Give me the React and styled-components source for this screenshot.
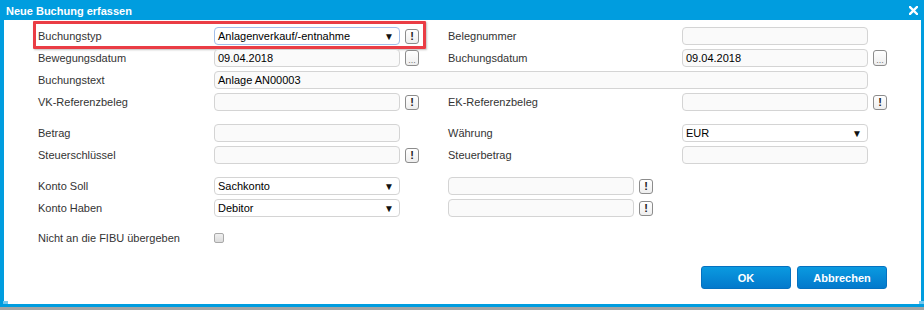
import React from "react";
import styled, { createGlobalStyle } from "styled-components";

const GlobalStyle = createGlobalStyle`
  html, body {
    margin: 0;
    padding: 0;
    background: #a4a4a4;
  }
  body {
    font-family: "Liberation Sans", Arial, sans-serif;
    font-size: 11px;
    color: #333;
  }
`;

const blue = "#009ddf";

const Window = styled.div`
  position: relative;
  width: 924px;
  height: 307px;
  background: ${blue};
  display: flex;
  flex-direction: column;
`;

const TitleBar = styled.div`
  height: 20px;
  padding: 1px 6px 0 6px;
  box-sizing: border-box;
  display: flex;
  align-items: center;
  justify-content: space-between;
  color: #fff;
  font-weight: bold;
  font-size: 11px;
`;

const Frame = styled.div`
  flex: 1;
  padding: 0 3px 3px 4px;
  display: flex;
`;

const Content = styled.div`
  flex: 1;
  background: #fff;
  padding: 5px 0 0 34px;
  display: flex;
  flex-direction: column;
`;

const ResizeGrip = styled.div`
  position: absolute;
  bottom: 3px;
  ${(p) => (p.$right ? "right: 0;" : "left: 3px;")}
  width: 5px;
  height: 3px;
  background: #74c8ef;
`;

const Row = styled.div`
  position: relative;
  display: grid;
  grid-template-columns: 176px 234px 234px auto;
  height: 22px;
  align-items: center;
  margin-top: ${(p) => p.$gap || 0}px;
`;

const Highlight = styled.div`
  position: absolute;
  left: -5px;
  top: -4px;
  width: 393px;
  height: 28px;
  box-sizing: border-box;
  border: 3px solid #ea3d45;
  border-radius: 1px;
  box-shadow: 1px 1px 2px rgba(0, 0, 0, 0.25);
  pointer-events: none;
`;

const Label = styled.div`
  color: #333;
  white-space: nowrap;
`;

const Cell = styled.div`
  display: flex;
  align-items: center;
  gap: 5px;
  grid-column: ${(p) => p.$span || "auto"};
`;

const Input = styled.div`
  box-sizing: border-box;
  width: ${(p) => p.$width || 186}px;
  height: 18px;
  border: 1px solid #d4d4d4;
  border-radius: 4px;
  background: #fafafa;
  padding: 0 3px;
  display: flex;
  align-items: center;
  justify-content: space-between;
  color: #000;
  font-size: 11px;
`;

const SelectBox = styled(Input)`
  background: #fff;
  border-color: ${(p) => (p.$focused ? "#a3bfea" : "#d4d4d4")};
  padding-right: 5px;
`;

const Arrow = styled.span`
  font-size: 10px;
  color: #111;
`;

const SmallButton = styled.div`
  box-sizing: border-box;
  width: 14px;
  height: ${(p) => (p.$dots ? 16 : 15)}px;
  border: 1px solid #8c8c8c;
  border-radius: 3px;
  background: linear-gradient(#ffffff, #eeeeee);
  display: flex;
  justify-content: center;
  align-items: ${(p) => (p.$dots ? "flex-end" : "center")};
  font-size: ${(p) => (p.$dots ? 9 : 11)}px;
  font-weight: ${(p) => (p.$dots ? "normal" : "bold")};
  color: ${(p) => (p.$dots ? "#777" : "#222")};
  line-height: ${(p) => (p.$dots ? "10px" : "1")};
`;

const Checkbox = styled.div`
  box-sizing: border-box;
  width: 10px;
  height: 10px;
  border: 1px solid #a9a9a9;
  border-radius: 2px;
  background: linear-gradient(#f0f0f0, #dcdcdc);
`;

const Footer = styled.div`
  display: flex;
  justify-content: flex-end;
  gap: 6px;
  margin-top: 17px;
  padding-right: 34px;
`;

const Button = styled.div`
  width: 90px;
  height: 23px;
  border-radius: 3px;
  background: linear-gradient(#0a9ae0, #0379cc);
  border: 1px solid #0571c0;
  box-sizing: border-box;
  color: #fff;
  font-weight: bold;
  font-size: 11px;
  display: flex;
  align-items: center;
  justify-content: center;
`;

const CloseIcon = () => (
  <svg width="9" height="9" viewBox="0 0 9 9">
    <path d="M1 1 L8 8 M8 1 L1 8" stroke="#fff" strokeWidth="2.4" strokeLinecap="square" />
  </svg>
);

const Info = () => <SmallButton>!</SmallButton>;
const Dots = () => <SmallButton $dots>...</SmallButton>;

const Select = ({ value, focused }) => (
  <SelectBox $focused={focused}>
    <span>{value}</span>
    <Arrow>▼</Arrow>
  </SelectBox>
);

export default function App() {
  return (
    <>
      <GlobalStyle />
      <Window>
        <TitleBar>
          <span>Neue Buchung erfassen</span>
          <CloseIcon />
        </TitleBar>
        <Frame>
          <Content>
            <Row>
              <Highlight />
              <Label>Buchungstyp</Label>
              <Cell>
                <Select value="Anlagenverkauf/-entnahme" focused />
                <Info />
              </Cell>
              <Label>Belegnummer</Label>
              <Cell>
                <Input />
              </Cell>
            </Row>
            <Row>
              <Label>Bewegungsdatum</Label>
              <Cell>
                <Input>09.04.2018</Input>
                <Dots />
              </Cell>
              <Label>Buchungsdatum</Label>
              <Cell>
                <Input>09.04.2018</Input>
                <Dots />
              </Cell>
            </Row>
            <Row>
              <Label>Buchungstext</Label>
              <Cell $span="2 / 5">
                <Input $width={654}>Anlage AN00003</Input>
              </Cell>
            </Row>
            <Row>
              <Label>VK-Referenzbeleg</Label>
              <Cell>
                <Input />
                <Info />
              </Cell>
              <Label>EK-Referenzbeleg</Label>
              <Cell>
                <Input />
                <Info />
              </Cell>
            </Row>
            <Row $gap={9}>
              <Label>Betrag</Label>
              <Cell>
                <Input />
              </Cell>
              <Label>Währung</Label>
              <Cell>
                <Select value="EUR" />
              </Cell>
            </Row>
            <Row>
              <Label>Steuerschlüssel</Label>
              <Cell>
                <Input />
                <Info />
              </Cell>
              <Label>Steuerbetrag</Label>
              <Cell>
                <Input />
              </Cell>
            </Row>
            <Row $gap={9}>
              <Label>Konto Soll</Label>
              <Cell>
                <Select value="Sachkonto" />
              </Cell>
              <Cell>
                <Input />
                <Info />
              </Cell>
            </Row>
            <Row>
              <Label>Konto Haben</Label>
              <Cell>
                <Select value="Debitor" />
              </Cell>
              <Cell>
                <Input />
                <Info />
              </Cell>
            </Row>
            <Row $gap={8}>
              <Label>Nicht an die FIBU übergeben</Label>
              <Cell>
                <Checkbox />
              </Cell>
            </Row>
            <Footer>
              <Button>OK</Button>
              <Button>Abbrechen</Button>
            </Footer>
          </Content>
        </Frame>
        <ResizeGrip />
        <ResizeGrip $right />
      </Window>
    </>
  );
}
